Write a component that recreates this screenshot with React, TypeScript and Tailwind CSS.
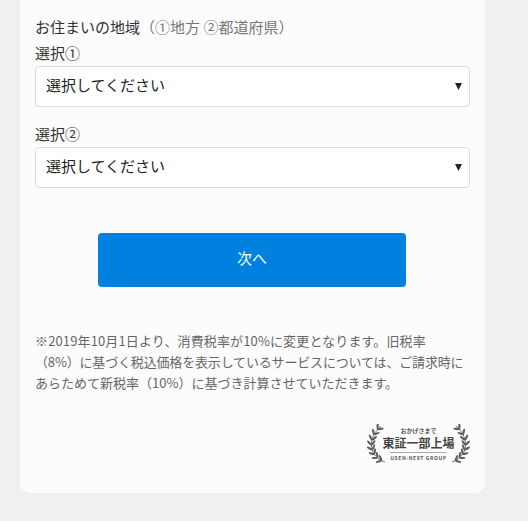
const FONT = "font-['Noto_Sans_CJK_JP','Liberation_Sans',sans-serif]";

const SelectBox = ({ label }: { label: string }) => {
    return (
        <div>
            <div className="h-[26px] text-[15px] leading-[26px] text-[#333]">{label}</div>
            <div className="relative">
                <select className="block h-[41px] w-full appearance-none rounded-[4px] border border-[#ddd] bg-white pb-[2px] pl-[10px] text-[15px] text-[#222] outline-none">
                    <option>選択してください</option>
                </select>
                <svg className="absolute right-[8px] top-[17px]" width="7" height="7" viewBox="0 0 7 7">
                    <polygon points="0,0 7,0 3.5,7" fill="#222" />
                </svg>
            </div>
        </div>
    );
};

// point on the laurel stem and its direction
const stem = (t: number) => {
    const [x0, y0, x1, y1, x2, y2, x3, y3] = [18, 38, 4, 34, -2, 16, 14, 2];
    const u = 1 - t;
    const x = u * u * u * x0 + 3 * u * u * t * x1 + 3 * u * t * t * x2 + t * t * t * x3;
    const y = u * u * u * y0 + 3 * u * u * t * y1 + 3 * u * t * t * y2 + t * t * t * y3;
    const dx = 3 * u * u * (x1 - x0) + 6 * u * t * (x2 - x1) + 3 * t * t * (x3 - x2);
    const dy = 3 * u * u * (y1 - y0) + 6 * u * t * (y2 - y1) + 3 * t * t * (y3 - y2);
    return { x, y, a: (Math.atan2(dy, dx) * 180) / Math.PI };
};

const Laurel = ({ flip }: { flip?: boolean }) => {
    const steps = [0.08, 0.2, 0.32, 0.44, 0.56, 0.68, 0.8, 0.92];
    return (
        <svg width="20" height="40" viewBox="0 0 20 40" className={`shrink-0 ${flip ? "-scale-x-100" : ""}`}>
            <path d="M18 38 C4 34 -2 16 14 2" fill="none" stroke="#555" strokeWidth="0.8" />
            {steps.map((t) => {
                const p = stem(t);
                return (
                    <g key={t} fill="#5c5c5c" transform={`translate(${p.x} ${p.y})`}>
                        <ellipse cx="3" cy="0" rx="3.2" ry="1.1" transform={`rotate(${p.a - 40})`} />
                        <ellipse cx="3" cy="0" rx="3.2" ry="1.1" transform={`rotate(${p.a + 40})`} />
                    </g>
                );
            })}
        </svg>
    );
};

export default function App() {
    return (
        <div className={`min-h-[521px] bg-[#f0f0f0] pl-[20px] pr-[43px] ${FONT}`}>
            <div className="flex h-[493px] flex-col rounded-b-[10px] bg-[#fcfcfc] px-[15px] pt-[14px]">
                <div className="h-[26px] text-[15px] leading-[26px] text-[#333]">
                    お住まいの地域<span className="text-[#777]">（①地方 ②都道府県）</span>
                </div>
                <div className="flex flex-col gap-[14px]">
                    <SelectBox label="選択①" />
                    <SelectBox label="選択②" />
                </div>
                <button
                    type="button"
                    className="ml-[63px] mt-[45px] h-[54px] w-[308px] rounded-[4px] bg-[#0081e0] pb-[4px] text-[15px] text-white"
                >
                    次へ
                </button>
                <p className="mt-[43px] whitespace-nowrap text-[13px] leading-[21px] text-[#666]">
                    <span className="tracking-[0.13px]">※2019年10月1日より、消費税率が10%に変更となります。旧税率</span>
                    <br />
                    <span className="tracking-[-0.17px]">（8%）に基づく税込価格を表示しているサービスについては、ご請求時に</span>
                    <br />
                    あらためて新税率（10%）に基づき計算させていただきます。
                </p>
                <div className="mt-[31px] flex justify-end">
                    <div className="flex w-[103px] items-center justify-between">
                        <Laurel />
                        <div className="-mx-[6px] flex flex-col items-center text-[#555]">
                            <div className="text-[6px] font-bold leading-[8px]">おかげさまで</div>
                            <div className="whitespace-nowrap text-[12px] font-bold leading-[15px] text-[#444]">東証一部上場</div>
                            <div className="mt-[2px] whitespace-nowrap border-t border-[#aaa] pt-[2px] text-[5px] font-bold leading-[6px] tracking-[0.6px]">USEN-NEXT GROUP</div>
                        </div>
                        <Laurel flip />
                    </div>
                </div>
            </div>
        </div>
    );
}
